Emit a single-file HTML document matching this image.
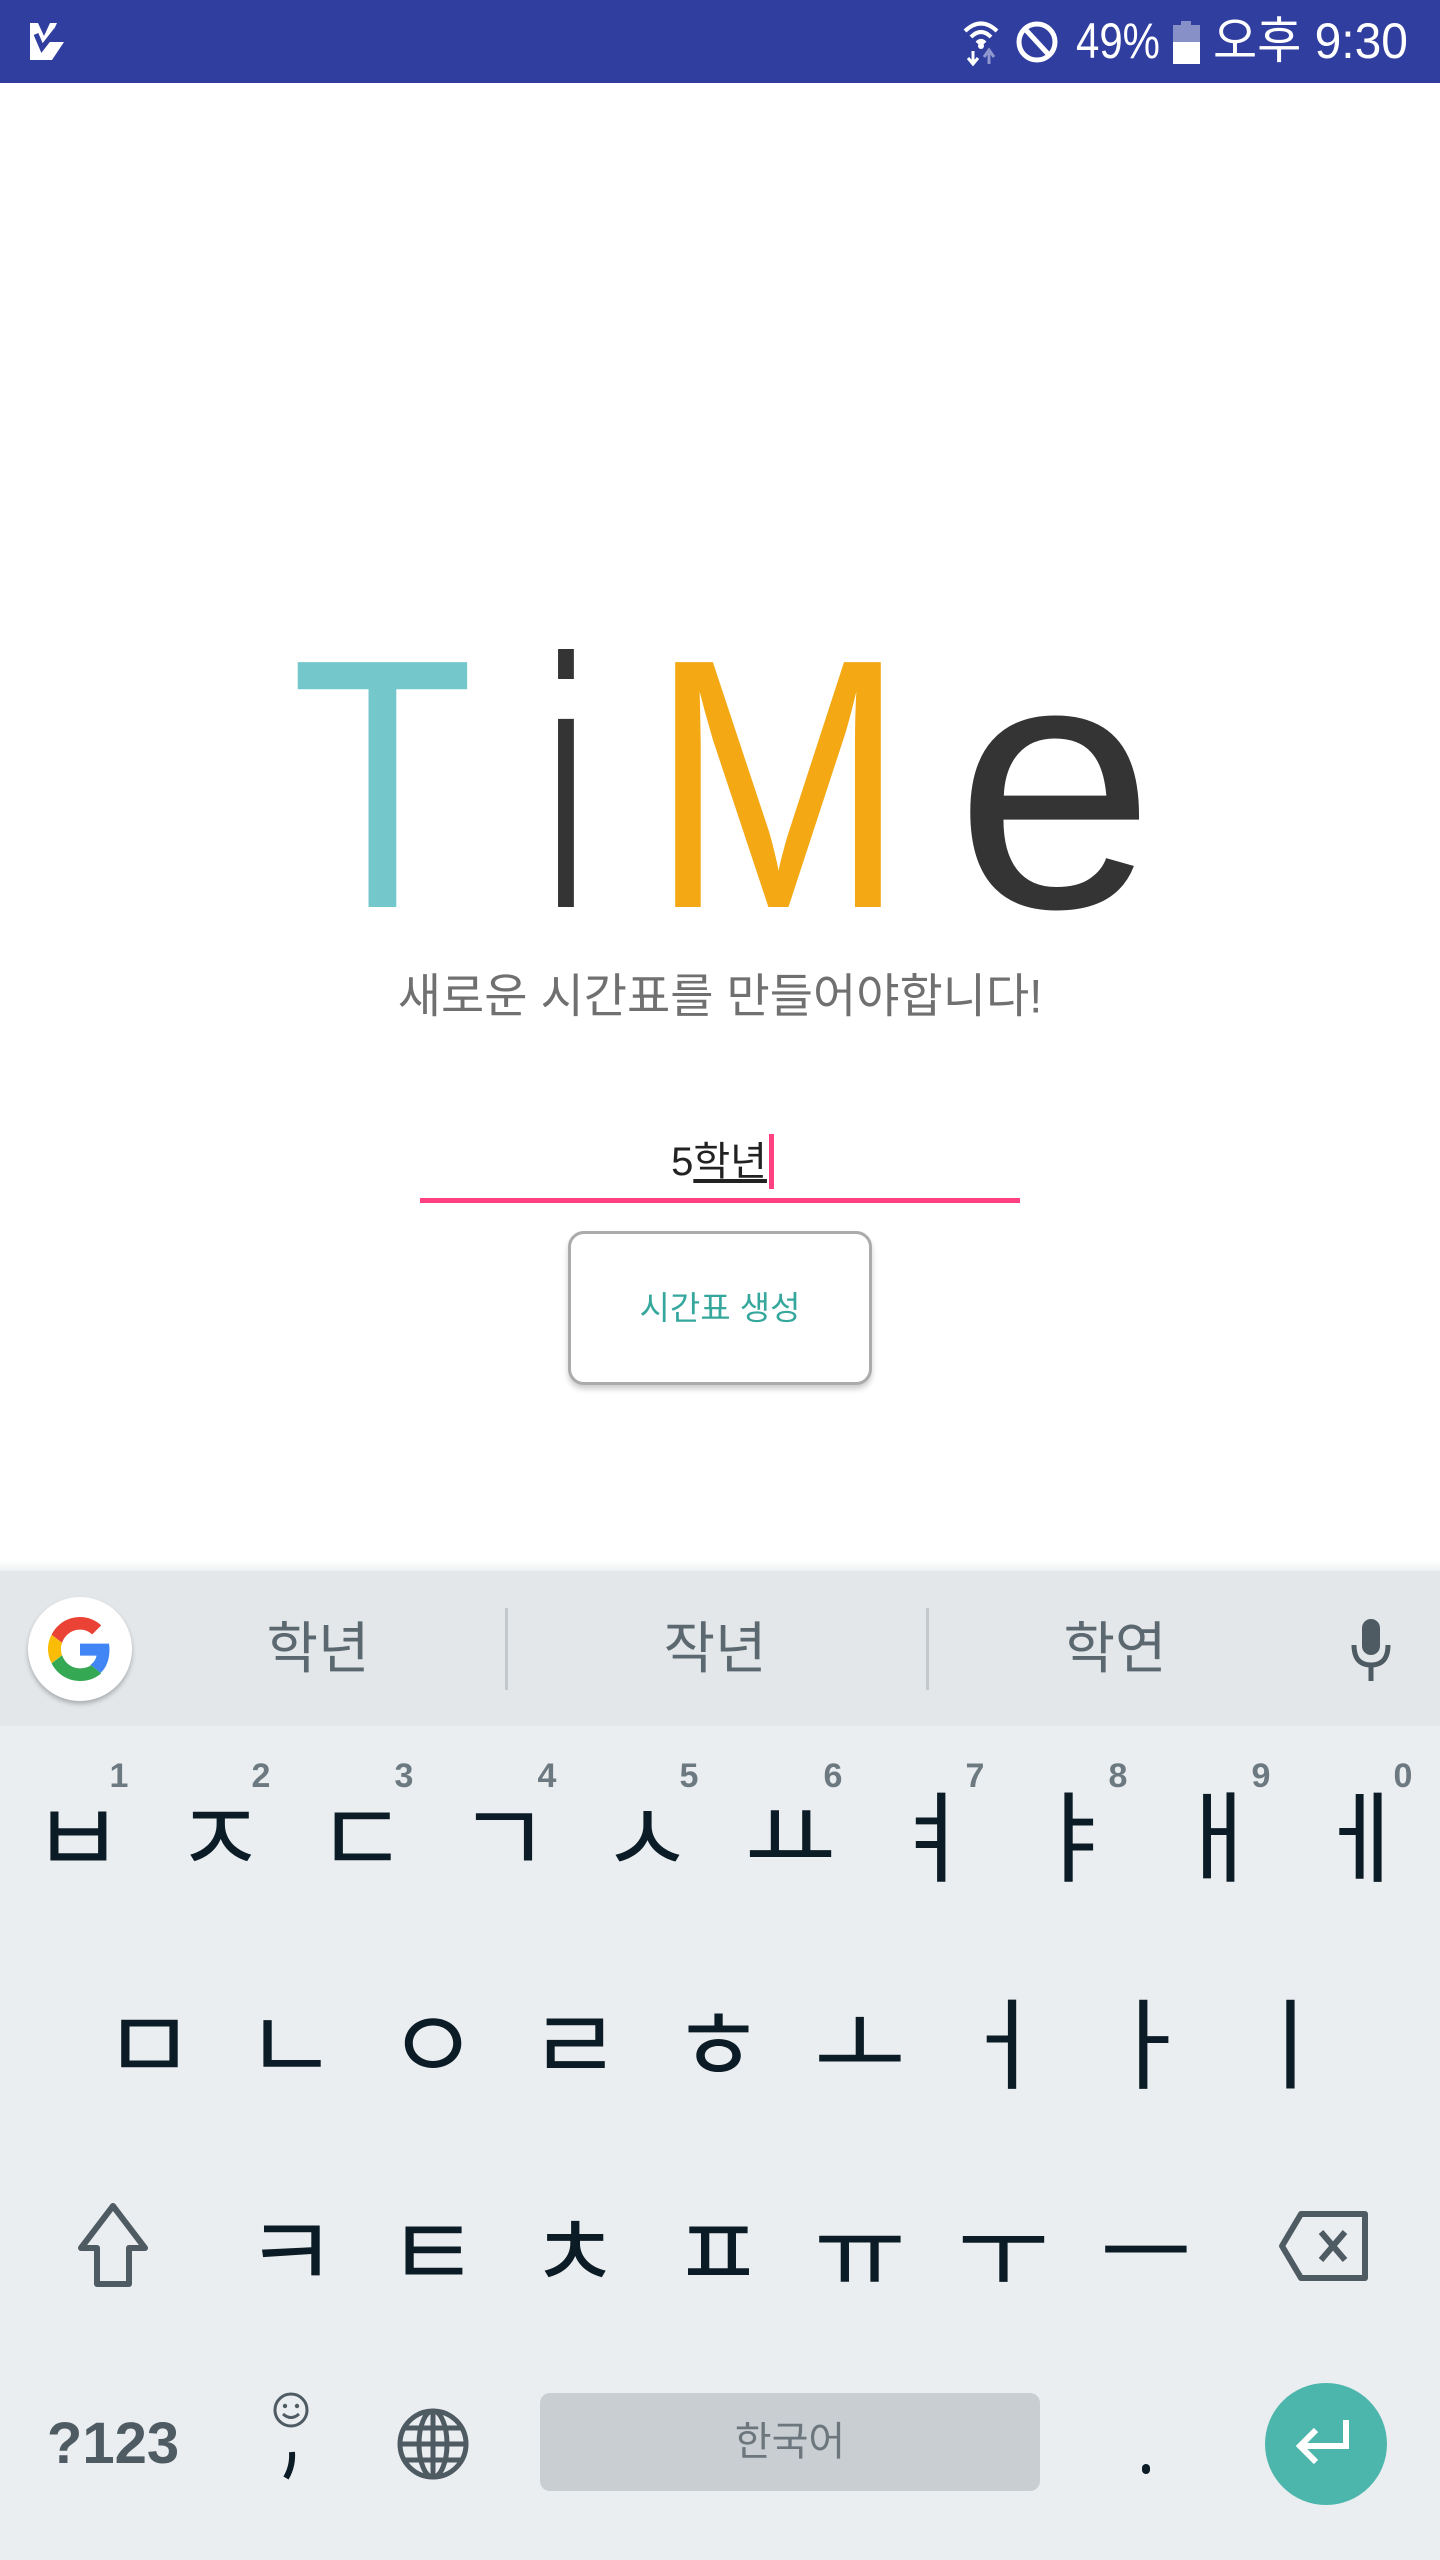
<!DOCTYPE html>
<html><head><meta charset="utf-8">
<style>
*{margin:0;padding:0;box-sizing:border-box}
body{width:1440px;height:2560px;position:relative;background:#fff;overflow:hidden;font-family:"Liberation Sans","Noto Sans CJK KR",sans-serif}
.abs{position:absolute}
.c{position:absolute;transform:translate(-50%,-50%);white-space:nowrap;line-height:1}
.k{font-family:"Noto Sans CJK KR",sans-serif;font-size:100px;font-weight:normal;color:#0b1c26}
.n{font-family:"Liberation Sans",sans-serif;font-size:34px;font-weight:bold;color:#6d7981}
.s{font-family:"Liberation Sans","Noto Sans CJK KR",sans-serif;font-size:56px;color:#5b6870}
</style></head><body>
<!-- status bar -->
<div class="abs" style="left:0;top:0;width:1440px;height:83px;background:#2f3e9f"></div>
<svg class="abs" style="left:0;top:0" width="1440" height="83">
  <path d="M30 23 L38 23 L44 36 L50 23 L57 23 L48 42 L64 42 L52 60 L30 60 Z" fill="#fff"/>
  <path d="M36 34 L42 48 L56 30" stroke="#2f3e9f" stroke-width="5" fill="none"/>
  <g fill="none" stroke="#fff" stroke-width="4">
    <path d="M965 31 Q981 16 997 31"/><path d="M971 37 Q981 27 991 37"/><path d="M977 43 Q981 39 985 43"/>
  </g>
  <circle cx="981" cy="46" r="3" fill="#fff"/>
  <path d="M973 51 V63 M968 58 L973 64 L978 58" stroke="#fff" stroke-width="3" fill="none"/>
  <path d="M989 64 V52 M984 57 L989 50 L994 57" stroke="#8f97cf" stroke-width="3" fill="none"/>
  <circle cx="1037" cy="42" r="18" fill="none" stroke="#fff" stroke-width="5"/>
  <path d="M1025 29 L1049 55" stroke="#fff" stroke-width="5"/>
  <text x="1076" y="58" font-family="Liberation Sans" font-size="50" fill="#fff" textLength="84" lengthAdjust="spacingAndGlyphs">49%</text>
  <rect x="1181" y="21" width="10" height="5" fill="#8890c8"/>
  <rect x="1173" y="25" width="27" height="17" fill="#8890c8"/>
  <rect x="1173" y="42" width="27" height="22" fill="#fff"/>
  <text x="1213" y="58" font-family="Liberation Sans,'Noto Sans CJK KR'" font-size="50" fill="#fff" textLength="195" lengthAdjust="spacingAndGlyphs">오후 9:30</text>
</svg>

<!-- TiMe -->
<svg class="abs" style="left:0;top:0" width="1440" height="1000">
  <g font-family="Liberation Sans" font-size="356">
    <text x="291" y="907" fill="#74c8cc" textLength="183" lengthAdjust="spacingAndGlyphs">T</text>
    <text x="546" y="907" fill="#343434" textLength="40" lengthAdjust="spacingAndGlyphs">i</text>
    <text x="650" y="907" fill="#f4a814" textLength="256" lengthAdjust="spacingAndGlyphs">M</text>
    <text x="955" y="907" fill="#343434" textLength="200" lengthAdjust="spacingAndGlyphs">e</text>
  </g>
</svg>
<div class="c" style="left:720px;top:996px;font-size:47px;color:#707070;font-family:'Liberation Sans','Noto Sans CJK KR',sans-serif">새로운 시간표를 만들어야합니다!</div>

<!-- input -->
<div class="c" style="left:719px;top:1162px;font-size:40px;color:#222">5<span style="text-decoration:underline;text-underline-offset:4px">학년</span></div>
<div class="abs" style="left:769px;top:1134px;width:5px;height:55px;background:#ff4081"></div>
<div class="abs" style="left:420px;top:1198px;width:600px;height:5px;background:#ff4081"></div>

<!-- button -->
<div class="abs" style="left:568px;top:1231px;width:304px;height:154px;border:3px solid #ababab;border-radius:16px;background:#fff;box-shadow:0 4px 6px rgba(0,0,0,.2)"></div>
<div class="c" style="left:720px;top:1308px;font-size:33px;color:#36a79d">시간표 생성</div>

<!-- keyboard -->
<div class="abs" style="left:0;top:1560px;width:1440px;height:12px;background:linear-gradient(#fff,#eceef0)"></div>
<div class="abs" style="left:0;top:1571px;width:1440px;height:155px;background:#e3e7ea"></div>
<div class="abs" style="left:0;top:1726px;width:1440px;height:834px;background:#ebeef1"></div>

<div class="abs" style="left:28px;top:1597px;width:104px;height:104px;border-radius:50%;background:#fff;box-shadow:0 3px 5px rgba(0,0,0,.25)"></div>
<svg class="abs" style="left:48px;top:1617px" width="64" height="64" viewBox="0 0 48 48">
  <path fill="#EA4335" d="M24 9.5c3.5 0 6.6 1.2 9.1 3.6l6.8-6.8C35.8 2.4 30.3 0 24 0 14.6 0 6.6 5.4 2.7 13.3l7.9 6.1C12.5 13.6 17.8 9.5 24 9.5z"/>
  <path fill="#4285F4" d="M46.1 24.5c0-1.600-.1-3.1-.4-4.5H24v9h12.4c-.5 2.9-2.2 5.3-4.6 6.9l7.7 6c4.5-4.2 6.6-10.3 6.6-17.4z"/>
  <path fill="#FBBC05" d="M10.5 28.6c-.5-1.5-.8-3-.8-4.6s.3-3.1.8-4.6l-7.9-6.1C1 16.6 0 20.2 0 24s1 7.4 2.7 10.7l7.8-6.1z"/>
  <path fill="#34A853" d="M24 48c6.5 0 11.9-2.1 15.9-5.8l-7.7-6c-2.2 1.5-5 2.3-8.2 2.3-6.2 0-11.5-4.1-13.4-9.8l-7.9 6.1C6.6 42.6 14.6 48 24 48z"/>
</svg>
<div class="c s" style="left:318px;top:1649px">학년</div>
<div class="c s" style="left:715px;top:1649px">작년</div>
<div class="c s" style="left:1115px;top:1649px">학연</div>
<div class="abs" style="left:505px;top:1608px;width:3px;height:82px;background:#c3c8cc"></div>
<div class="abs" style="left:926px;top:1608px;width:3px;height:82px;background:#c3c8cc"></div>
<svg class="abs" style="left:1346px;top:1615px" width="50" height="70">
  <rect x="16" y="4" width="18" height="36" rx="9" fill="#4e5b63"/>
  <path d="M8 30 Q8 50 25 50 Q42 50 42 30" stroke="#4e5b63" stroke-width="5" fill="none"/>
  <path d="M25 50 V66" stroke="#4e5b63" stroke-width="5"/>
</svg>

<!-- numbers -->
<div class="c n" style="left:119px;top:1776px">1</div>
<div class="c n" style="left:261px;top:1776px">2</div>
<div class="c n" style="left:404px;top:1776px">3</div>
<div class="c n" style="left:547px;top:1776px">4</div>
<div class="c n" style="left:689px;top:1776px">5</div>
<div class="c n" style="left:833px;top:1776px">6</div>
<div class="c n" style="left:975px;top:1776px">7</div>
<div class="c n" style="left:1118px;top:1776px">8</div>
<div class="c n" style="left:1261px;top:1776px">9</div>
<div class="c n" style="left:1403px;top:1776px">0</div>

<!-- row1 -->
<div class="c k" style="left:78px;top:1831px">ㅂ</div>
<div class="c k" style="left:220px;top:1831px">ㅈ</div>
<div class="c k" style="left:362px;top:1831px">ㄷ</div>
<div class="c k" style="left:504px;top:1831px">ㄱ</div>
<div class="c k" style="left:647px;top:1831px">ㅅ</div>
<div class="c k" style="left:790px;top:1831px">ㅛ</div>
<div class="c k" style="left:932px;top:1831px">ㅕ</div>
<div class="c k" style="left:1074px;top:1831px">ㅑ</div>
<div class="c k" style="left:1218px;top:1831px">ㅐ</div>
<div class="c k" style="left:1362px;top:1831px">ㅔ</div>
<!-- row2 -->
<div class="c k" style="left:149px;top:2038px">ㅁ</div>
<div class="c k" style="left:291px;top:2038px">ㄴ</div>
<div class="c k" style="left:433px;top:2038px">ㅇ</div>
<div class="c k" style="left:575px;top:2038px">ㄹ</div>
<div class="c k" style="left:718px;top:2038px">ㅎ</div>
<div class="c k" style="left:860px;top:2038px">ㅗ</div>
<div class="c k" style="left:1003px;top:2038px">ㅓ</div>
<div class="c k" style="left:1146px;top:2038px">ㅏ</div>
<div class="c k" style="left:1290px;top:2038px">ㅣ</div>
<!-- row3 -->
<svg class="abs" style="left:73px;top:2200px" width="80" height="90">
  <path d="M40 6 L72 48 H56 V84 H24 V48 H8 Z" fill="none" stroke="#4e5b63" stroke-width="6" stroke-linejoin="round"/>
</svg>
<div class="c k" style="left:291px;top:2245px">ㅋ</div>
<div class="c k" style="left:433px;top:2245px">ㅌ</div>
<div class="c k" style="left:575px;top:2245px">ㅊ</div>
<div class="c k" style="left:718px;top:2245px">ㅍ</div>
<div class="c k" style="left:860px;top:2245px">ㅠ</div>
<div class="c k" style="left:1003px;top:2245px">ㅜ</div>
<div class="c k" style="left:1146px;top:2245px">ㅡ</div>
<svg class="abs" style="left:1277px;top:2210px" width="94" height="72">
  <path d="M24 4 H88 V68 H24 L5 36 Z" fill="none" stroke="#4e5b63" stroke-width="6" stroke-linejoin="round"/>
  <path d="M44 22 L68 50 M68 22 L44 50" stroke="#4e5b63" stroke-width="6"/>
</svg>
<!-- row4 -->
<div class="c" style="left:113px;top:2444px;font-size:58px;font-weight:bold;color:#4e5b63;font-family:'Liberation Sans',sans-serif">?123</div>
<svg class="abs" style="left:270px;top:2390px" width="44" height="95">
  <circle cx="21" cy="20" r="16" fill="none" stroke="#4e5b63" stroke-width="3"/>
  <circle cx="15" cy="16" r="2.2" fill="#4e5b63"/><circle cx="27" cy="16" r="2.2" fill="#4e5b63"/>
  <path d="M13 24 Q21 31 29 24" stroke="#4e5b63" stroke-width="3" fill="none"/>
  <path d="M22 62 Q23 76 16 88" stroke="#0b1c26" stroke-width="6" fill="none"/>
</svg>
<svg class="abs" style="left:395px;top:2406px" width="76" height="76" viewBox="0 0 76 76">
  <g fill="none" stroke="#4e5b63" stroke-width="5">
    <circle cx="38" cy="38" r="33"/>
    <ellipse cx="38" cy="38" rx="14" ry="33"/>
    <path d="M38 5 V71 M5 38 H71 M10 22 H66 M10 54 H66"/>
  </g>
</svg>
<div class="abs" style="left:540px;top:2393px;width:500px;height:98px;background:#c9ced2;border-radius:10px"></div>
<div class="c" style="left:790px;top:2442px;font-size:40px;color:#6b767d">한국어</div>
<div class="abs" style="left:1142px;top:2464px;width:8px;height:10px;border-radius:4px;background:#0b1c26"></div>
<div class="abs" style="left:1265px;top:2383px;width:122px;height:122px;border-radius:50%;background:#4db6ac"></div>
<svg class="abs" style="left:1290px;top:2410px" width="72" height="68">
  <path d="M56 10 V36 H12 M26 20 L10 36 L26 52" fill="none" stroke="#fff" stroke-width="6"/>
</svg>
</body></html>
